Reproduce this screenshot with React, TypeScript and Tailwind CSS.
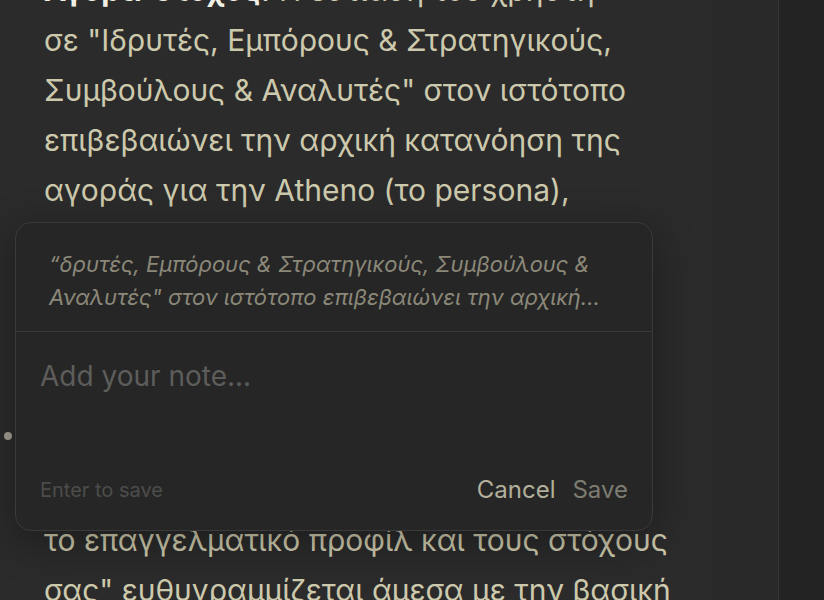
import React from "react";

const lines = [
  <>
    <span className="font-bold text-[#f1efe4]">Αγορά-στόχος:</span> Η εστίαση του χρήστη
  </>,
  <>σε "Ιδρυτές, Εμπόρους &amp; Στρατηγικούς,</>,
  <>Συμβούλους &amp; Αναλυτές" στον ιστότοπο</>,
  <>επιβεβαιώνει την αρχική κατανόηση της</>,
  <>αγοράς για την Atheno (το persona),</>,
  <>ενώ η δήλωση "συνδέστε την αρχή της</>,
  <>γνώσης σας με την επιχείρηση, με βάση</>,
  <>τις πραγματικές σας εμπειρίες" δείχνει</>,
  <>μια ξεκάθαρη κατεύθυνση. Η φράση</>,
  <>"προσαρμοσμένη στρατηγική βάσει</>,
  <>δεδομένων, σύμφωνα με</>,
  <>το επαγγελματικό προφίλ και τους στόχους</>,
  <>σας" ευθυγραμμίζεται άμεσα με την βασική</>,
];

function NotePopover() {
  return (
    <div className="absolute left-[15px] top-[222px] w-[638px] rounded-2xl border border-[#3a3a3a] bg-[#262626] shadow-[0_10px_40px_rgba(0,0,0,0.35)]">
      {/* quoted selection */}
      <div className="border-b border-[#383838] pl-[33px] pr-6 pt-[25px] pb-[17px] text-[22px] leading-[33px] italic text-[#8b8879]">
        “δρυτές, Εμπόρους &amp; Στρατηγικούς, Συμβούλους &amp;
        <br />
        Αναλυτές" στον ιστότοπο επιβεβαιώνει την αρχική...
      </div>
      <div className="px-6 pt-6 pb-[24px]">
        <textarea
          placeholder="Add your note..."
          className="block h-[110px] w-full resize-none bg-transparent text-[28px] leading-10 text-[#d8d5c4] outline-none placeholder:text-[#5d5d5b]"
        />
        <div className="mt-2 flex h-8 items-center justify-between">
          <span className="text-[20px] text-[#4d4d4b]">Enter to save</span>
          <div className="flex items-center gap-[17px] text-[24px]">
            <button className="text-[#b3b09c]">Cancel</button>
            <button className="text-[#7d7c72]">Save</button>
          </div>
        </div>
      </div>
    </div>
  );
}

export default function App() {
  return (
    <div
      className="flex h-[600px] w-[824px] overflow-hidden bg-[#2b2b2b]"
      style={{ fontFamily: "Inter, 'Noto Sans', sans-serif" }}
    >
      <main className="relative w-[712px] shrink-0">
        <div className="-mt-[35px] pl-[44px] text-[30px] leading-[50px] text-[#cdc9ad]">
          {lines.map((l, i) => (
            <div key={i} className="whitespace-nowrap">
              {l}
            </div>
          ))}
        </div>
        {/* margin marker */}
        <span className="absolute left-[4px] top-[432px] h-2 w-2 rounded-full bg-[#a09e94]" />
        <NotePopover />
      </main>
      <div className="w-[66px] shrink-0 bg-[#292929]" />
      <aside className="flex-1 border-l border-[#343434] bg-[#232323]" />
    </div>
  );
}
